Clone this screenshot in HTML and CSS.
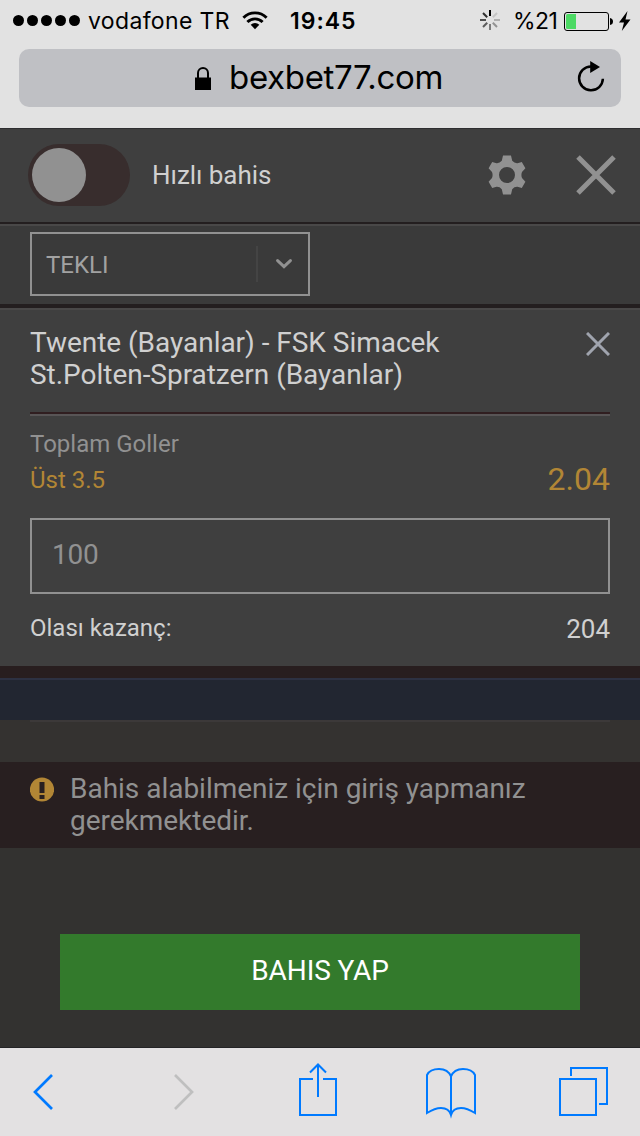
FILE: index.html
```html
<!DOCTYPE html>
<html lang="tr">
<head>
<meta charset="utf-8">
<title>bexbet77.com</title>
<link rel="stylesheet" href="styles.css">
</head>
<body>
<header class="browser">
  <div class="status">
    <div class="signal"><i></i><i></i><i></i><i></i><i></i></div>
    <span class="carrier">vodafone TR</span>
    <svg class="wifi" width="26" height="20" viewBox="0 0 26 20"><g fill="none" stroke="#000" stroke-width="2.9"><path d="M1.4 7.7a16.4 16.4 0 0 1 23.2 0"/><path d="M5.4 12a10.7 10.7 0 0 1 15.2 0"/></g><path d="M8.7 14.8a6.1 6.1 0 0 1 8.6 0L13 19.2z"/></svg>
    <span class="clock">19:45</span>
    <svg class="spinner" width="20" height="20" viewBox="-10 -10 20 20"><g stroke="#000" stroke-width="2"><path d="M0-4v-6"/><path d="M-2.8-2.8-7-7" opacity=".8"/><path d="M-4 0h-6" opacity=".65"/><path d="M-2.8 2.8-7 7" opacity=".6"/><path d="M0 4v6" opacity=".45"/><path d="M2.8 2.8 7 7" opacity=".35"/><path d="M4 0h6" opacity=".22"/><path d="M2.8-2.8 7-7" opacity=".12"/></g></svg>
    <span class="percent">%21</span>
    <svg class="battery" width="49" height="19" viewBox="0 0 49 19"><rect x=".5" y=".5" width="44" height="18" rx="2.5" fill="none" stroke="#000"/><path d="M2 3.5Q2 2 3.5 2H12v15H3.5Q2 17 2 15.5z" fill="#4cd964"/><path d="M46 6q3 .5 3 3.500t-3 3.500z"/></svg>
    <svg class="bolt" width="12" height="20" viewBox="0 0 12 20"><path d="M8.500 0 0 11.500h5L2.800 20 11.500 8.500h-5z"/></svg>
  </div>
  <div class="address">
    <svg class="lock" width="16" height="23" viewBox="0 0 16 23"><path d="M0 10.500h16V23H0z"/><path d="M3 11V6a5 5 0 0 1 10 0v5" fill="none" stroke="#000" stroke-width="2"/></svg>
    <span class="host">bexbet77.com</span>
    <svg class="reload" width="28" height="31" viewBox="0 0 28 31"><path d="M14 5.500A11.900 11.900 0 1 0 25.900 17.800" fill="none" stroke="#000" stroke-width="2.500"/><path d="M13.200 0v12L23 6z"/></svg>
  </div>
</header>

<main class="slip">
  <section class="quick">
    <div class="toggle"><i class="knob"></i></div>
    <span class="quick-label">Hızlı bahis</span>
    <svg class="gear" width="38" height="40" viewBox="-19 -20 38 40"><path fill="#919191" fill-rule="evenodd" d="M-4-19.500H4L5.200-14.200Q7.500-11.500 10.500-11.800L14.800-13 18.400-6.800 15-3Q13.800 0 15 3L18.400 6.800 14.800 13 10.500 11.800Q7.500 11.500 5.200 14.200L4 19.500H-4L-5.200 14.200Q-7.500 11.500-10.500 11.800L-14.800 13-18.400 6.800-15 3Q-13.800 0-15-3L-18.400-6.800-14.800-13-10.500-11.800Q-7.500-11.500-5.200-14.200ZM0-8A8 8 0 1 0 0 8 8 8 0 1 0 0-8Z"/></svg>
    <svg class="close" width="40" height="40" viewBox="0 0 40 40"><path d="m2 2 36 36M38 2 2 38" stroke="#919191" stroke-width="5"/></svg>
  </section>
  <section class="kind">
    <div class="select"><span>TEKLI</span><i class="split"></i><svg class="chevron" width="16" height="10" viewBox="0 0 16 10"><path d="m1.600 1.600 6.400 6 6.400-6" fill="none" stroke="#919191" stroke-width="3" stroke-linecap="round"/></svg></div>
  </section>
  <section class="bet">
    <div class="match">
      <h1>Twente (Bayanlar) - FSK Simacek<br>St.Polten-Spratzern (Bayanlar)</h1>
      <svg class="remove" width="24" height="24" viewBox="0 0 24 24"><path d="m1 1 22 22M23 1 1 23" stroke="#a0a4ae" stroke-width="3"/></svg>
    </div>
    <div class="pick">
      <div><p class="market">Toplam Goller</p><p class="choice">Üst 3.5</p></div>
      <span class="odds">2.04</span>
    </div>
    <div class="stake">100</div>
    <div class="gain"><span>Olası kazanç:</span><span class="amount">204</span></div>
  </section>
  <div class="band"></div>
  <div class="gap"><i></i></div>
  <section class="notice">
    <svg width="24" height="25" viewBox="0 0 24 25"><circle cx="12" cy="12.500" r="12.100" fill="#b28635"/><path d="M9.500 5h5v11h-5zM9.500 18h5v4h-5z" fill="#281f20"/></svg>
    <p>Bahis alabilmeniz için giriş yapmanız gerekmektedir.</p>
  </section>
  <section class="action"><div class="submit">BAHIS YAP</div></section>
</main>

<footer class="toolbar">
  <svg width="640" height="88" viewBox="0 0 640 88" fill="none" stroke="#007aff" stroke-width="2">
    <path d="M52 27 35 44l17 17" stroke-width="2.700"/>
    <path d="m175 27 17 17-17 17" stroke="#bfbfbf" stroke-width="2.700"/>
    <path d="M313 31h-13v36h36V31h-13M318 49V17M310 24.500l8-8 8 8"/>
    <path d="M427 65V27Q430 21 439 21 448 21 451 28.500 454 21 463 21 472 21 475 27V65Q467 60 461 60 453 60 451 67 449 60 441 60 435 60 427 65ZM451 28V67"/>
    <path d="M560 31h36v36h-36zM571 28v-8h36v36h-8"/>
  </svg>
</footer>
</body>
</html>
```
FILE: styles.css
```css
* { box-sizing: border-box; }
body { margin: 0; width: 640px; height: 1136px; overflow: hidden; background: #333230; font-family: Roboto, sans-serif; }
h1, p { margin: 0; font-weight: 400; }
svg { display: block; flex: none; }
span { white-space: nowrap; }

.browser { height: 129px; background: #e2e2e2; border-bottom: 1px solid #2e2e30; font-family: Inter, sans-serif; color: #000; }
.status { display: flex; align-items: center; height: 41px; padding-left: 13px; font-size: 23px; line-height: 28px; }
.signal { display: flex; gap: 2.800px; width: 75px; flex: none; }
.signal i { width: 11.200px; height: 11.200px; border-radius: 50%; background: #000; }
.carrier { width: 154px; letter-spacing: 0.350px; }
.wifi { margin-top: -2px; }
.clock { width: 190px; margin-left: 22px; font-weight: 600; letter-spacing: 1px; }
.spinner { margin-top: -1px; }
.percent { width: 51px; margin-left: 13px; letter-spacing: -0.500px; }
.battery { margin-top: 1px; }
.bolt { margin-left: 6px; }
.address { display: flex; align-items: center; height: 58px; margin: 8px 19px 0; padding-left: 176px; border-radius: 10px; background: #bfc0c4; }
.host { width: 348px; margin-left: 18px; padding-bottom: 2px; font-size: 33px; line-height: 40px; letter-spacing: -0.320px; }
.reload { margin-top: -3px; }

.quick { display: flex; align-items: center; height: 93px; padding: 0 0 2px 28px; background: #3f3f3f; }
.toggle { display: flex; align-items: center; width: 102px; height: 62px; padding-left: 4px; border-radius: 31px; background: #382d2d; }
.knob { width: 54px; height: 54px; border-radius: 50%; background: #919191; }
.quick-label { width: 337px; margin-left: 22px; font-size: 26px; letter-spacing: -0.050px; color: #d0d0d0; }
.gear { margin-left: -1px; }
.close { margin-left: 50px; }
.kind { height: 86px; padding: 8px 30px 0; border-top: 2px solid #231e1f; border-bottom: 4px solid #231e1f; background: linear-gradient(#494848 2px, #3a3a3a 2px); }
.kind { padding-top: 8px; }
.select { display: flex; align-items: center; width: 280px; height: 64px; padding-left: 14px; border: 2px solid #919191; font-size: 24px; color: #a2a2a2; }
.select span { width: 210px; padding-top: 1px; }
.split { width: 2px; height: 36px; background: #444; }
.chevron { margin-left: 18px; }

.bet { height: 358px; padding: 18px 30px 0; background: linear-gradient(#494848 2px, #3f3f3f 2px); color: #d0d0d0; }
.match { display: flex; justify-content: space-between; height: 90px; border-bottom: 2px solid #585556; box-shadow: inset 0 -2px #301e20; }
.match h1 { padding-top: 1px; font-size: 28px; line-height: 32px; letter-spacing: -0.030px; }
.remove { margin-top: 6px; }
.pick { display: flex; justify-content: space-between; height: 102px; padding-top: 10px; font-size: 24px; line-height: 36px; }
.market { color: #919191; }
.choice, .odds { color: #b28635; }
.odds { padding-top: 35px; font-size: 32px; }
.stake { height: 76px; padding-left: 20px; border: 2px solid #919191; font-size: 28px; line-height: 69px; letter-spacing: -0.200px; color: #919191; }
.gain { display: flex; justify-content: space-between; padding-top: 16px; font-size: 24px; line-height: 36px; }
.amount { padding-top: 1px; font-size: 26px; }

.band { height: 54px; border-top: 12px solid #281e1f; background: linear-gradient(#2d3142 2px, #222631 2px); }
.gap { height: 42px; padding: 0 30px; background: #343230; }
.gap i { display: block; height: 2px; background: #3c3939; }
.notice { display: flex; height: 86px; padding: 11px 30px 0; background: #281f20; font-size: 28px; line-height: 32px; letter-spacing: -0.020px; color: #919191; }
.notice svg { margin-top: 4px; }
.notice p { width: 480px; margin-left: 16px; }
.action { height: 200px; padding: 86px 60px 0; background: #333230; border-bottom: 1px solid #242426; }
.submit { height: 76px; background: #337a2c; color: #fff; font-size: 28px; line-height: 73px; letter-spacing: -0.080px; text-align: center; }
.toolbar { height: 88px; background: #e3e1e2; }
```
